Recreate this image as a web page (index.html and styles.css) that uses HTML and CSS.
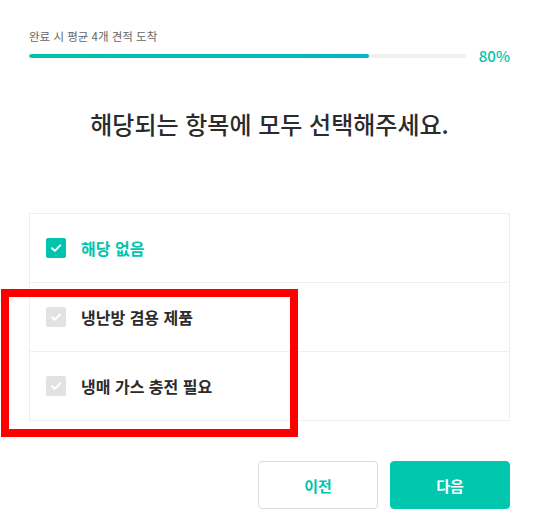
FILE: index.html
```html
<!DOCTYPE html>
<html lang="ko">
<head>
<meta charset="utf-8">
<link rel="stylesheet" href="styles.css">
</head>
<body>
<div class="page">
  <div class="progress-label">완료 시 평균 4개 견적 도착</div>
  <div class="progress-row">
    <div class="track"><div class="fill" style="width: 77.8%"></div></div>
    <div class="percent">80%</div>
  </div>
  <h1 class="title">해당되는 항목에 모두 선택해주세요.</h1>
  <ul class="options">
    <li class="option checked">
      <span class="box"><svg viewBox="0 0 20 20" width="20" height="20"><path d="M6 10.2l2.8 2.7L14.2 7.4" fill="none" stroke="#fff" stroke-width="2" stroke-linecap="round" stroke-linejoin="round"/></svg></span>
      <span class="text">해당 없음</span>
    </li>
    <li class="option">
      <span class="box"><svg viewBox="0 0 20 20" width="20" height="20"><path d="M6 10.2l2.8 2.7L14.2 7.4" fill="none" stroke="#fff" stroke-width="2" stroke-linecap="round" stroke-linejoin="round"/></svg></span>
      <span class="text">냉난방 겸용 제품</span>
    </li>
    <li class="option">
      <span class="box"><svg viewBox="0 0 20 20" width="20" height="20"><path d="M6 10.2l2.8 2.7L14.2 7.4" fill="none" stroke="#fff" stroke-width="2" stroke-linecap="round" stroke-linejoin="round"/></svg></span>
      <span class="text">냉매 가스 충전 필요</span>
    </li>
  </ul>
  <div class="actions">
    <button class="btn prev">이전</button>
    <button class="btn next">다음</button>
  </div>
</div>
<div class="highlight"></div>
</body>
</html>
```
FILE: styles.css
```css
html, body {
  margin: 0;
  padding: 0;
  background: #fff;
}
body {
  font-family: "Noto Sans CJK KR", "Noto Sans", sans-serif;
  color: #2e2e2e;
  position: relative;
  width: 538px;
  height: 528px;
  overflow: hidden;
}
.page {
  padding: 28px 28px 0 29px;
  display: flex;
  flex-direction: column;
}
.progress-label {
  font-size: 11.5px;
  line-height: 16px;
  color: #666;
}
.progress-row {
  margin-top: 2px;
  height: 20px;
  display: flex;
  align-items: center;
  gap: 13px;
}
.track {
  width: 437px;
  height: 4px;
  background: #f0f0f0;
  border-radius: 2px;
  overflow: hidden;
}
.fill {
  height: 100%;
  border-radius: 2px;
  background: linear-gradient(90deg, #00c3a8, #00b7c3);
}
.percent {
  font-size: 15px;
  font-weight: 500;
  color: #00c4ad;
  line-height: 20px;
}
.title {
  margin: 42px 0 0;
  font-size: 24px;
  line-height: 32px;
  font-weight: 500;
  text-align: center;
  color: #2b2b2b;
}
.options {
  list-style: none;
  margin: 73px 0 0;
  padding: 0;
  border: 1px solid #efefef;
}
.option {
  height: 68px;
  display: flex;
  align-items: center;
  padding-left: 16px;
  gap: 15px;
}
.option + .option {
  border-top: 1px solid #efefef;
}
.box {
  width: 20px;
  height: 20px;
  border-radius: 2px;
  background: #e2e2e2;
  display: flex;
}
.option.checked .box {
  background: #00c4ad;
}
.text {
  font-size: 16px;
  font-weight: 700;
  color: #2b2b2b;
}
.option.checked .text {
  color: #00c4ad;
}
.actions {
  margin-top: 40px;
  display: flex;
  justify-content: flex-end;
  gap: 12px;
}
.btn {
  width: 120px;
  height: 48px;
  border-radius: 4px;
  font-family: inherit;
  font-size: 15px;
  font-weight: 700;
  cursor: pointer;
}
.btn.prev {
  background: #fff;
  border: 1px solid #dcdcdc;
  color: #00c4ad;
}
.btn.next {
  background: #00c7ae;
  border: 1px solid #00c7ae;
  color: #fff;
}
.highlight {
  position: absolute;
  left: 1px;
  top: 289px;
  width: 297px;
  height: 148px;
  box-sizing: border-box;
  border: 8px solid #ff0000;
  pointer-events: none;
}
```
